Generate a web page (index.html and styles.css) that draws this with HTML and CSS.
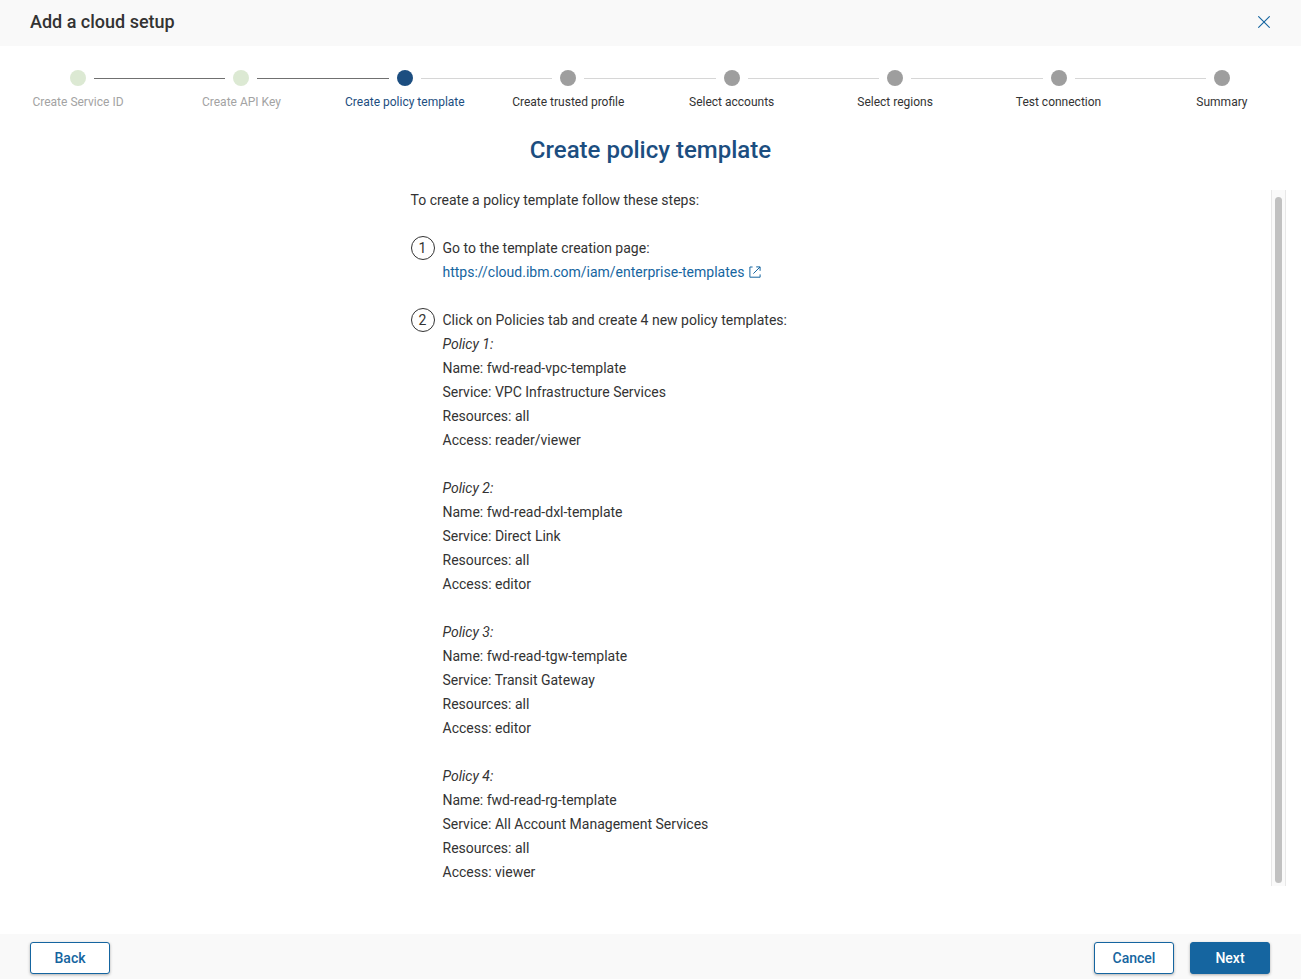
FILE: index.html
```html
<!DOCTYPE html>
<html lang="en">
<head>
<meta charset="utf-8">
<meta name="viewport" content="width=device-width, initial-scale=1">
<title>Add a cloud setup</title>
<link rel="stylesheet" href="styles.css">
</head>
<body class="dialog">
<header class="dialog-header">
  <h1 class="dialog-title">Add a cloud setup</h1>
  <button class="close" type="button" aria-label="Close">
    <svg width="12" height="12" viewBox="0 0 12 12" aria-hidden="true"><path d="M.3.3l11.4 11.4M11.7.3L.3 11.7" fill="none" stroke="currentColor" stroke-width="1.1"/></svg>
  </button>
</header>

<ol class="stepper">
  <li class="step done"><span class="marker"></span><span class="label">Create Service ID</span></li>
  <li class="step done"><span class="marker"></span><span class="label">Create API Key</span></li>
  <li class="step current" aria-current="step"><span class="marker"></span><span class="label">Create policy template</span></li>
  <li class="step"><span class="marker"></span><span class="label">Create trusted profile</span></li>
  <li class="step"><span class="marker"></span><span class="label">Select accounts</span></li>
  <li class="step"><span class="marker"></span><span class="label">Select regions</span></li>
  <li class="step"><span class="marker"></span><span class="label">Test connection</span></li>
  <li class="step"><span class="marker"></span><span class="label">Summary</span></li>
</ol>

<h2 class="page-title">Create policy template</h2>

<main class="content">
  <div class="instructions">
    <p>To create a policy template follow these steps:</p>
    <ol class="tasks">
      <li class="task">
        <span class="number">1</span>
        <div>
          <p>Go to the template creation page:</p>
          <a class="link" href="https://cloud.ibm.com/iam/enterprise-templates">https://cloud.ibm.com/iam/enterprise-templates
            <svg width="12" height="12" viewBox="0 0 12 12" aria-hidden="true"><path d="M3.6 1H.9v10.2h10.2V8.4M4.4 7.6L11 1M7.2.9h3.9v3.9" fill="none" stroke="currentColor" stroke-width="1"/></svg>
          </a>
        </div>
      </li>
      <li class="task">
        <span class="number">2</span>
        <div class="policies">
          <div>
            <p>Click on Policies tab and create 4 new policy templates:</p>
            <p><em>Policy 1:</em></p>
            <p>Name: fwd-read-vpc-template</p>
            <p>Service: VPC Infrastructure Services</p>
            <p>Resources: all</p>
            <p>Access: reader/viewer</p>
          </div>
          <div>
            <p><em>Policy 2:</em></p>
            <p>Name: fwd-read-dxl-template</p>
            <p>Service: Direct Link</p>
            <p>Resources: all</p>
            <p>Access: editor</p>
          </div>
          <div>
            <p><em>Policy 3:</em></p>
            <p>Name: fwd-read-tgw-template</p>
            <p>Service: Transit Gateway</p>
            <p>Resources: all</p>
            <p>Access: editor</p>
          </div>
          <div>
            <p><em>Policy 4:</em></p>
            <p>Name: fwd-read-rg-template</p>
            <p>Service: All Account Management Services</p>
            <p>Resources: all</p>
            <p>Access: viewer</p>
          </div>
        </div>
      </li>
    </ol>
  </div>
  <div class="scroll-track" aria-hidden="true"><div class="scroll-thumb"></div></div>
</main>

<footer class="dialog-footer">
  <button class="button" type="button">Back</button>
  <div class="footer-actions">
    <button class="button" type="button">Cancel</button>
    <button class="button primary" type="button">Next</button>
  </div>
</footer>
</body>
</html>
```
FILE: styles.css
```css
* { box-sizing: border-box; }

.dialog {
  margin: 0;
  min-height: 100vh;
  display: flex;
  flex-direction: column;
  background: #fff;
  color: #333;
  font: 14px/24px Roboto, "Liberation Sans", sans-serif;
}

p, ol { margin: 0; padding: 0; }
ol { list-style: none; }

.dialog-header {
  display: flex;
  align-items: center;
  justify-content: space-between;
  padding: 10px 31px 12px 30px;
  background: #f9f9f9;
}
.dialog-title { margin: 0; font-size: 18px; line-height: 24px; font-weight: 500; }
.close {
  display: flex;
  padding: 0;
  border: 0;
  background: none;
  color: #1565a0;
  cursor: pointer;
}

.stepper { display: flex; padding: 24px 31px 0 30px; }
.step { flex: 1 1 0; min-width: 0; font-size: 12px; line-height: 16px; }
.step:last-child { flex: 0 0 96px; }
.marker {
  display: flex;
  align-items: center;
  gap: 8px;
  margin: 0 -32px 8px 40px;
}
.marker::before {
  content: "";
  flex: none;
  width: 16px;
  height: 16px;
  border-radius: 50%;
  background: #9e9e9e;
}
.marker::after { content: ""; flex: 1; height: 1px; background: #d6d6d6; }
.step:last-child .marker::after { display: none; }
.label { display: flex; justify-content: center; width: 96px; white-space: nowrap; }
.done { color: #a3a3a3; }
.done .marker::before { background: #dce9d3; }
.done .marker::after { background: #707070; }
.current { color: #1c4e80; }
.current .marker::before { background: #1c4e80; }

.page-title {
  margin: 24px 0;
  text-align: center;
  font-size: 24px;
  line-height: 32px;
  font-weight: 500;
  color: #1c4e80;
}

.content {
  flex: 1;
  display: flex;
  justify-content: space-between;
  padding: 0 15px 48px 30px;
}
.instructions { flex: 0 0 480px; margin: -2px auto 0; }
.tasks { display: grid; gap: 24px; margin-top: 24px; }
.task { display: flex; gap: 8px; }
.number {
  flex: none;
  width: 24px;
  height: 24px;
  line-height: 22px;
  border: 1px solid #333;
  border-radius: 50%;
  text-align: center;
}
.policies { display: grid; gap: 24px; }
.link { color: #1565a0; text-decoration: none; display: inline-flex; align-items: center; gap: 5px; }

.scroll-track {
  display: flex;
  width: 15px;
  padding: 7px 3px 3px;
  background: #fafafa;
  border: solid #e8e8e8;
  border-width: 0 1px;
}
.scroll-thumb { flex: 1; border-radius: 4px; background: #c1c1c1; }

.dialog-footer {
  display: flex;
  justify-content: space-between;
  padding: 8px 31px 5px 30px;
  background: #f9f9f9;
}
.footer-actions { display: flex; gap: 16px; }
.button {
  width: 80px;
  height: 32px;
  padding: 0;
  border: 1px solid #1565a0;
  border-radius: 3px;
  background: #fff;
  color: #1565a0;
  font: inherit;
  font-weight: 500;
  box-shadow: 0 1px 3px rgba(0, 0, 0, .3);
  cursor: pointer;
}
.primary { background: #1565a0; color: #fff; }
```
